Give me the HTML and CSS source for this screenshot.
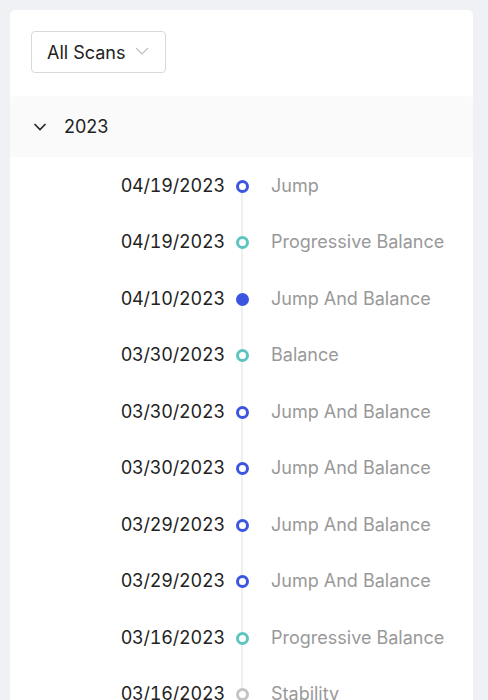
FILE: index.html
```html
<!DOCTYPE html>
<html>
<head>
<meta charset="utf-8">
<link rel="stylesheet" href="styles.css">
</head>
<body>
<div class="card">
  <div class="toolbar">
    <div class="select">
      <span>All Scans</span>
      <svg class="sel-chev" width="14" height="10" viewBox="0 0 14 10"><path d="M1 2 L7 8 L13 2" fill="none" stroke="#bfbfbf" stroke-width="1.2"/></svg>
    </div>
  </div>
  <div class="year">
    <svg class="year-chev" width="14" height="10" viewBox="0 0 14 10"><path d="M1.5 2 L7 7.5 L12.5 2" fill="none" stroke="#222" stroke-width="1.6"/></svg>
    <span>2023</span>
  </div>
  <ul class="timeline">
    <li class="row"><span class="date">04/19/2023</span><span class="axis"><i class="dot blue"></i></span><span class="label">Jump</span></li>
    <li class="row"><span class="date">04/19/2023</span><span class="axis"><i class="dot teal"></i></span><span class="label">Progressive Balance</span></li>
    <li class="row"><span class="date">04/10/2023</span><span class="axis"><i class="dot filled"></i></span><span class="label">Jump And Balance</span></li>
    <li class="row"><span class="date">03/30/2023</span><span class="axis"><i class="dot teal"></i></span><span class="label">Balance</span></li>
    <li class="row"><span class="date">03/30/2023</span><span class="axis"><i class="dot blue"></i></span><span class="label">Jump And Balance</span></li>
    <li class="row"><span class="date">03/30/2023</span><span class="axis"><i class="dot blue"></i></span><span class="label">Jump And Balance</span></li>
    <li class="row"><span class="date">03/29/2023</span><span class="axis"><i class="dot blue"></i></span><span class="label">Jump And Balance</span></li>
    <li class="row"><span class="date">03/29/2023</span><span class="axis"><i class="dot blue"></i></span><span class="label">Jump And Balance</span></li>
    <li class="row"><span class="date">03/16/2023</span><span class="axis"><i class="dot teal"></i></span><span class="label">Progressive Balance</span></li>
    <li class="row"><span class="date">03/16/2023</span><span class="axis"><i class="dot grey"></i></span><span class="label">Stability</span></li>
  </ul>
</div>
</body>
</html>
```
FILE: styles.css
```css
html, body {
  margin: 0;
  padding: 0;
}
body {
  background: #f0f1f5;
  font-family: Inter, "Noto Sans", sans-serif;
  height: 700px;
  overflow: hidden;
  padding: 10px 15px 0 10px;
  box-sizing: border-box;
}
.card {
  background: #fff;
  border-radius: 5px;
  width: 463px;
  min-height: 700px;
}
.toolbar {
  padding: 21px 21px 23px;
}
.select {
  display: inline-flex;
  align-items: center;
  gap: 10px;
  height: 42px;
  box-sizing: border-box;
  width: 135px;
  padding: 0 14px 0 15px;
  border: 1px solid #d9d9d9;
  border-radius: 4px;
  font-size: 18px;
  color: #222;
}
.sel-chev {
  margin-top: -2px;
}
.year {
  display: flex;
  align-items: center;
  height: 61px;
  background: #fafafa;
  padding-left: 23px;
  font-size: 18px;
  color: #222;
  gap: 17px;
  border-radius: 4px 4px 0 0;
}
.timeline {
  list-style: none;
  margin: 0;
  padding: 0;
}
.row {
  display: flex;
  align-items: center;
  height: 56.5px;
  font-size: 18px;
}
.date {
  width: 215px;
  text-align: right;
  color: #222;
  font-variant-numeric: tabular-nums;
  letter-spacing: -0.2px;
}
.axis {
  position: relative;
  width: 34px;
  height: 100%;
  display: flex;
  align-items: center;
  justify-content: center;
}
.axis::before {
  content: "";
  position: absolute;
  left: 16px;
  width: 2px;
  top: 0;
  bottom: 0;
  background: #efefef;
}
.row:first-child .axis::before {
  top: 50%;
}
.dot {
  position: relative;
  width: 13px;
  height: 13px;
  box-sizing: border-box;
  border-radius: 50%;
  background: #fff;
  border: 3px solid #3b55e0;
  margin: 2px 0 0 1px;
}
.dot.teal { border-color: #5cc5bf; }
.dot.grey { border-color: #c4c4c4; }
.dot.filled { background: #3b55e0; }
.label {
  padding-left: 12px;
  color: #999;
}
```
